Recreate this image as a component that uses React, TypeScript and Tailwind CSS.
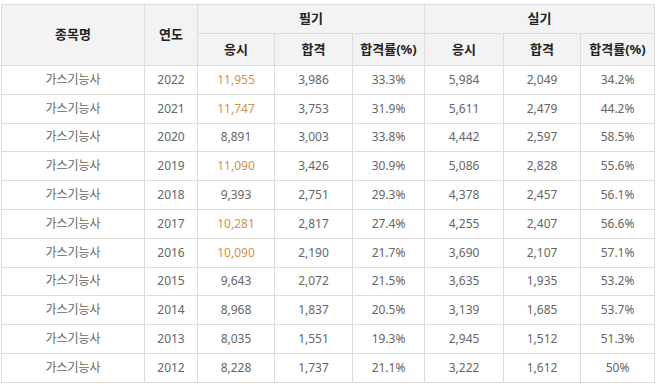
const rows: [string, string, string, string, string, string, string][] = [
  ["2022", "11,955", "3,986", "33.3%", "5,984", "2,049", "34.2%"],
  ["2021", "11,747", "3,753", "31.9%", "5,611", "2,479", "44.2%"],
  ["2020", "8,891", "3,003", "33.8%", "4,442", "2,597", "58.5%"],
  ["2019", "11,090", "3,426", "30.9%", "5,086", "2,828", "55.6%"],
  ["2018", "9,393", "2,751", "29.3%", "4,378", "2,457", "56.1%"],
  ["2017", "10,281", "2,817", "27.4%", "4,255", "2,407", "56.6%"],
  ["2016", "10,090", "2,190", "21.7%", "3,690", "2,107", "57.1%"],
  ["2015", "9,643", "2,072", "21.5%", "3,635", "1,935", "53.2%"],
  ["2014", "8,968", "1,837", "20.5%", "3,139", "1,685", "53.7%"],
  ["2013", "8,035", "1,551", "19.3%", "2,945", "1,512", "51.3%"],
  ["2012", "8,228", "1,737", "21.1%", "3,222", "1,612", "50%"],
];

const th = "border border-[#dddddd] bg-[#f3f3f3] font-bold text-[13px] text-[#222] text-center p-0";
const td = "border border-[#dddddd] text-center text-[12px] text-[#666] p-0 h-[28.8px]";

export default function App() {
  return (
    <div className="bg-white w-[657px] h-[384px] overflow-hidden pt-[4px] pl-[1px] font-['Noto_Sans','Noto_Sans_CJK_KR',sans-serif]">
      <table className="border-collapse table-fixed w-[653px]">
        <colgroup>
          <col className="w-[143px]" />
          <col className="w-[53px]" />
          <col className="w-[77px]" />
          <col className="w-[78px]" />
          <col className="w-[72px]" />
          <col className="w-[79px]" />
          <col className="w-[77px]" />
          <col className="w-[74px]" />
        </colgroup>
        <thead>
          <tr className="h-[29px]">
            <th rowSpan={2} className={th}>종목명</th>
            <th rowSpan={2} className={th}>연도</th>
            <th colSpan={3} className={th}>필기</th>
            <th colSpan={3} className={th}>실기</th>
          </tr>
          <tr className="h-[32px]">
            <th className={th}>응시</th>
            <th className={th}>합격</th>
            <th className={th}>합격률(%)</th>
            <th className={th}>응시</th>
            <th className={th}>합격</th>
            <th className={th}>합격률(%)</th>
          </tr>
        </thead>
        <tbody>
          {rows.map((r) => (
            <tr key={r[0]}>
              <td className={td}>가스기능사</td>
              <td className={td}>{r[0]}</td>
              <td className={`${td} ${r[1].length > 5 ? "!text-[#d4904c]" : ""}`}>{r[1]}</td>
              <td className={td}>{r[2]}</td>
              <td className={td}>{r[3]}</td>
              <td className={td}>{r[4]}</td>
              <td className={td}>{r[5]}</td>
              <td className={td}>{r[6]}</td>
            </tr>
          ))}
        </tbody>
      </table>
    </div>
  );
}
